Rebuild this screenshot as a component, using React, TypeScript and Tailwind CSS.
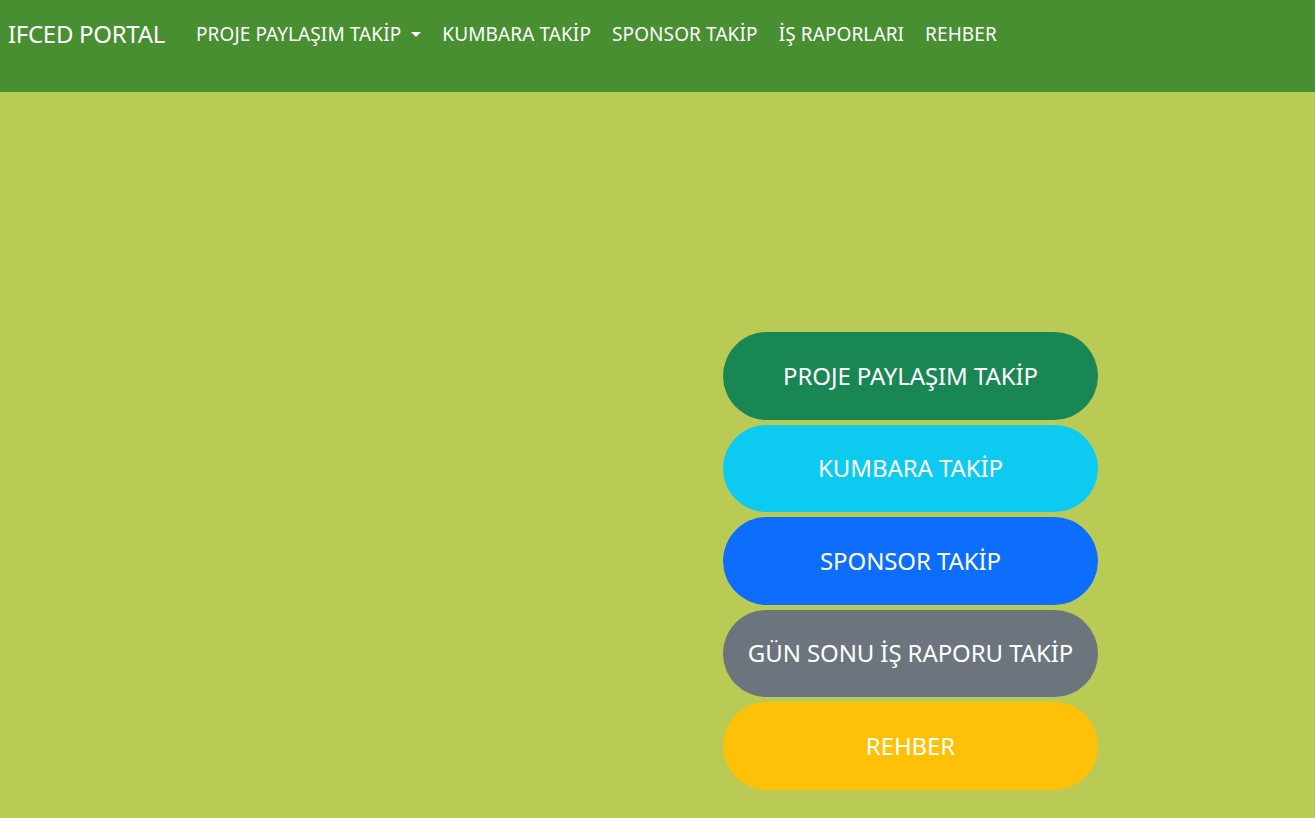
import React from "react";

const navLinks = ["KUMBARA TAKİP", "SPONSOR TAKİP", "İŞ RAPORLARI", "REHBER"];

const buttons = [
  { label: "PROJE PAYLAŞIM TAKİP", cls: "bg-[#198754]" },
  { label: "KUMBARA TAKİP", cls: "bg-[#0dcaf0]" },
  { label: "SPONSOR TAKİP", cls: "bg-[#0d6efd]" },
  { label: "GÜN SONU İŞ RAPORU TAKİP", cls: "bg-[#6c757d]" },
  { label: "REHBER", cls: "bg-[#ffc107]" },
];

export default function App() {
  return (
    <div className="min-h-[818px] bg-[#bacb55] font-['Noto_Sans',sans-serif] text-white">
      <nav className="h-[92px] bg-[#488f31] flex items-start pt-[17px] pl-[8px]">
        <span className="w-[188px] text-[24px] leading-[34px] tracking-[-0.3px]">IFCED PORTAL</span>
        <ul className="flex items-center text-[19px] leading-[34px] tracking-[0.1px] gap-[21px]">
          <li className="flex items-center gap-[10px]">
            PROJE PAYLAŞIM TAKİP
            <span className="w-0 h-0 border-l-[5.5px] border-r-[5.5px] border-t-[5.5px] border-l-transparent border-r-transparent border-t-white mt-[1px]" />
          </li>
          {navLinks.map((l) => (
            <li key={l}>{l}</li>
          ))}
        </ul>
      </nav>
      <main className="flex justify-end pr-[217px] pt-[240px] pb-[28px]">
        <div className="flex flex-col gap-[5px] w-[375px]">
          {buttons.map((b) => (
            <button
              key={b.label}
              className={`${b.cls} h-[87.5px] rounded-full text-white text-[24px] tracking-[-0.1px]`}
            >
              {b.label}
            </button>
          ))}
        </div>
      </main>
    </div>
  );
}
